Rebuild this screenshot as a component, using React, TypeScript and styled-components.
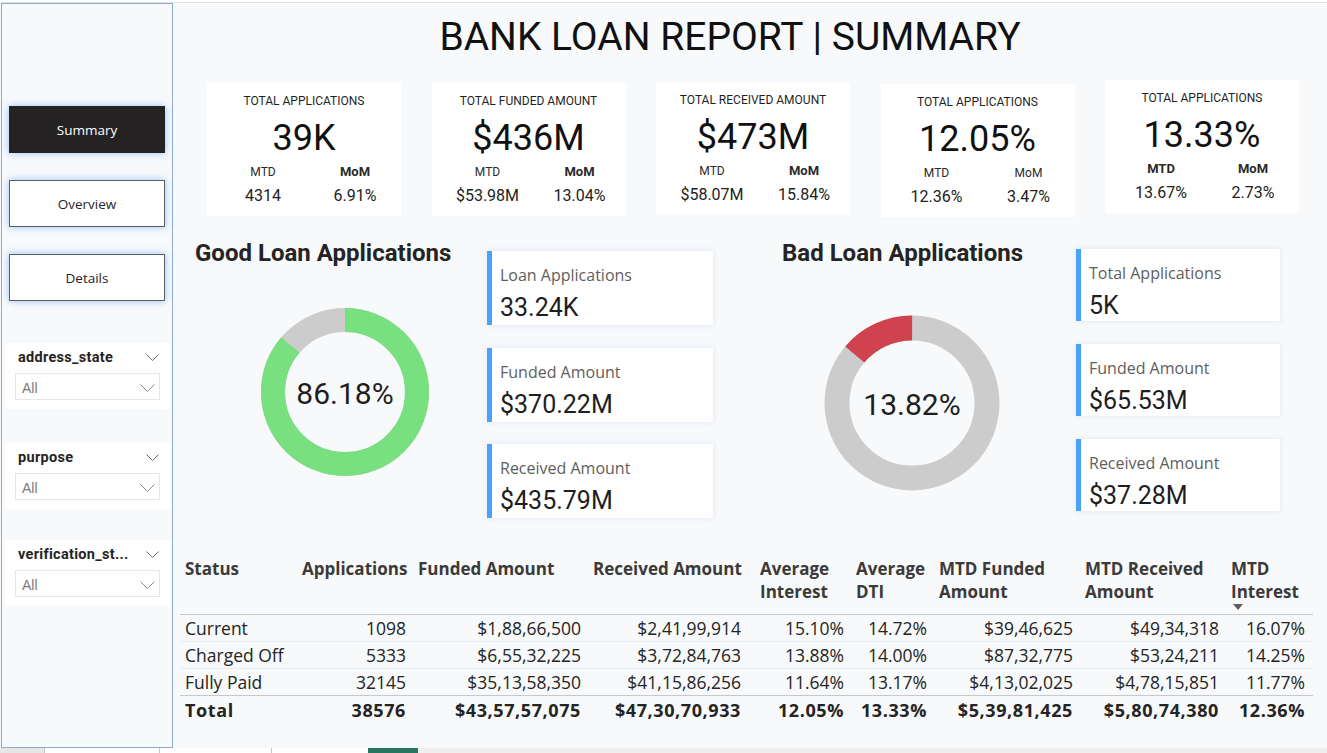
import React from 'react';
import styled, { createGlobalStyle } from 'styled-components';

const DIN = `Roboto, "Liberation Sans", sans-serif`;
const SEGOE = `"Segoe UI", "Open Sans", "Noto Sans", sans-serif`;

const GlobalStyle = createGlobalStyle`
  html, body { margin: 0; padding: 0; background: #f7f9fb; }
  body { font-family: ${SEGOE}; overflow: hidden; }
  * { box-sizing: border-box; }
`;

const Page = styled.div`
  width: 1327px;
  height: 753px;
  display: flex;
  flex-direction: column;
  background: #f7f9fb;
  overflow: hidden;
`;

const TopStrip = styled.div`
  height: 3px;
  flex-shrink: 0;
  background: #fff;
  border-bottom: 1px solid #e2e2e2;
`;

const Body = styled.div`
  flex: 1;
  display: flex;
  min-height: 0;
`;

const Sidebar = styled.aside`
  width: 172px;
  margin-left: 1px;
  flex-shrink: 0;
  border: 1px solid #8aabd3;
  background: #f7f9fb;
  display: flex;
  flex-direction: column;
  padding-top: 102px;
`;

const NavStack = styled.nav`
  display: flex;
  flex-direction: column;
  gap: 27px;
  padding-left: 7px;
`;

const NavButton = styled.div<{ $active?: boolean }>`
  width: 156px;
  height: 47px;
  display: flex;
  align-items: center;
  justify-content: center;
  font-family: ${SEGOE};
  font-size: 13.5px;
  color: ${(p) => (p.$active ? '#ffffff' : '#252423')};
  background: ${(p) => (p.$active ? '#252223' : '#ffffff')};
  border: ${(p) => (p.$active ? 'none' : '1.5px solid #5e5e5e')};
  box-shadow: 0 0 7px rgba(64, 146, 255, 0.55);
`;

const FilterStack = styled.div`
  display: flex;
  flex-direction: column;
  margin-top: 42px;
  padding-left: 3px;
`;

const FilterPanel = styled.div<{ $gap?: number }>`
  width: 165px;
  height: 66px;
  background: #ffffff;
  margin-top: ${(p) => p.$gap ?? 0}px;
`;

const FilterHead = styled.div`
  display: flex;
  align-items: center;
  justify-content: space-between;
  height: 26px;
  padding: 2px 11px 0 13px;
  font-family: ${DIN};
  font-weight: 700;
  font-size: 14.5px;
  letter-spacing: 0.3px;
  color: #252423;
`;

const Dropdown = styled.div`
  margin: 4px 0 0 10px;
  width: 145px;
  height: 27px;
  border: 1px solid #e6e6e6;
  display: flex;
  align-items: center;
  justify-content: space-between;
  padding: 2px 4px 0 6px;
  font-family: "Liberation Sans", Arial, sans-serif;
  font-size: 14px;
  color: #7a7a7a;
`;

const Main = styled.main`
  flex: 1;
  display: flex;
  flex-direction: column;
  min-width: 0;
`;

const Title = styled.h1`
  margin: 11px 0 0 0;
  width: 1114px;
  text-align: center;
  font-family: ${DIN};
  font-weight: 400;
  font-size: 39px;
  line-height: 46px;
  color: #111111;
`;

const KpiRow = styled.div`
  display: flex;
  gap: 30.5px;
  margin-top: 23px;
  padding-left: 34px;
  height: 133px;
`;

const KpiCard = styled.div<{ $dy?: number }>`
  width: 194px;
  height: 133px;
  background: #ffffff;
  display: flex;
  flex-direction: column;
  align-items: center;
  padding-top: 10px;
  margin-top: ${(p) => p.$dy ?? 0}px;
  font-family: ${DIN};
  color: #1c1c1c;
`;

const KpiLabel = styled.div`
  font-size: 12px;
  line-height: 16px;
  color: #1f1f1f;
`;

const KpiValue = styled.div`
  font-size: 36px;
  line-height: 40px;
  margin-top: 9px;
  color: #111;
`;

const KpiSub = styled.div`
  width: 100%;
  display: grid;
  grid-template-columns: 92px 92px;
  padding-left: 10px;
  margin-top: 6px;
  text-align: center;
`;

const SubLabel = styled.div<{ $bold?: boolean }>`
  font-size: ${(p) => (p.$bold ? 13 : 12)}px;
  font-weight: ${(p) => (p.$bold ? 700 : 400)};
  line-height: 16px;
  color: #2a2a2a;
`;

const SubValue = styled.div`
  font-size: 16px;
  line-height: 20px;
  margin-top: 6px;
  color: #222;
`;

const Middle = styled.section`
  display: flex;
  margin-top: 23px;
  padding-left: 22px;
  height: 290px;
`;

const LoanPanel = styled.div<{ $w: number }>`
  display: flex;
  width: ${(p) => p.$w}px;
`;

const LeftCol = styled.div<{ $w: number }>`
  width: ${(p) => p.$w}px;
  display: flex;
  flex-direction: column;
`;

const Heading = styled.h2`
  margin: 0;
  font-family: ${DIN};
  font-weight: 700;
  font-size: 24px;
  line-height: 28px;
  color: #252423;
  white-space: nowrap;
`;

const DonutWrap = styled.div<{ $size: number; $top: number; $left: number }>`
  position: relative;
  width: ${(p) => p.$size}px;
  height: ${(p) => p.$size}px;
  margin-top: ${(p) => p.$top}px;
  margin-left: ${(p) => p.$left}px;
`;

const DonutLabel = styled.div`
  position: absolute;
  inset: 0;
  display: flex;
  align-items: center;
  justify-content: center;
  padding-top: 2px;
  font-family: ${DIN};
  font-size: 30px;
  color: #1e1e1e;
`;

const CardCol = styled.div<{ $w: number; $top: number; $gap: number }>`
  width: ${(p) => p.$w}px;
  display: flex;
  flex-direction: column;
  gap: ${(p) => p.$gap}px;
  padding-top: ${(p) => p.$top}px;
`;

const InfoCard = styled.div<{ $h: number }>`
  height: ${(p) => p.$h}px;
  background: #ffffff;
  border-left: 5px solid #4ba2f8;
  box-shadow: 0 0 6px rgba(40, 80, 140, 0.1);
  padding: 13px 0 0 8px;
`;

const InfoLabel = styled.div`
  font-family: ${SEGOE};
  font-size: 16px;
  line-height: 22px;
  color: #605e5c;
`;

const InfoValue = styled.div`
  font-family: ${DIN};
  font-size: 25px;
  line-height: 30px;
  margin-top: 7px;
  color: #1e1e1e;
`;

const Table = styled.div<{ $cols: string }>`
  display: grid;
  grid-template-columns: ${(p) => p.$cols};
  margin: 27px 0 0 7px;
  width: 1133px;
  font-family: ${SEGOE};
  color: #252423;
`;

const HeadCell = styled.div<{ $pl: number }>`
  height: 59px;
  padding: 1px 0 0 ${(p) => p.$pl}px;
  font-size: 17px;
  font-weight: 700;
  line-height: 23px;
  color: #3b3a39;
  white-space: nowrap;
  border-bottom: 1px solid #c8c8c8;
`;

const Cell = styled.div<{ $left?: boolean; $bold?: boolean; $strong?: boolean; $last?: boolean }>`
  height: 27px;
  display: flex;
  align-items: center;
  justify-content: ${(p) => (p.$left ? 'flex-start' : 'flex-end')};
  padding: ${(p) => (p.$left ? '0 0 0 5px' : '0 8px 0 0')};
  font-size: ${(p) => (p.$bold ? 18 : 17.5)}px;
  letter-spacing: ${(p) => (p.$bold ? 0.6 : 0)}px;
  font-weight: ${(p) => (p.$bold ? 700 : 400)};
  white-space: nowrap;
  border-bottom: ${(p) => (p.$last ? 'none' : p.$strong ? '1px solid #c8c8c8' : '1px solid #ececec')};
`;

const SortMark = styled.div`
  width: 0;
  height: 0;
  margin: 1px 0 0 2px;
  border-left: 5px solid transparent;
  border-right: 5px solid transparent;
  border-top: 6px solid #5f5f5f;
`;

const BottomStrip = styled.div`
  height: 5px;
  flex-shrink: 0;
  display: flex;
  background: #f1efed;
`;

const Tab = styled.div<{ $w: number; $bg: string; $divider?: boolean }>`
  width: ${(p) => p.$w}px;
  background: ${(p) => p.$bg};
  border-right: ${(p) => (p.$divider ? '1px solid #c8c6c4' : 'none')};
`;

const Chevron = ({ w, h, color }: { w: number; h: number; color: string }) => (
  <svg width={w} height={h} viewBox={`0 0 ${w} ${h}`} fill="none">
    <polyline points={`0.5,0.5 ${w / 2},${h - 0.5} ${w - 0.5},0.5`} stroke={color} strokeWidth="1" />
  </svg>
);

const Donut = ({ size, r, stroke, pct, start, color, base }: { size: number; r: number; stroke: number; pct: number; start: number; color: string; base: string }) => {
  const c = 2 * Math.PI * r;
  const mid = size / 2;
  return (
    <svg width={size} height={size} viewBox={`0 0 ${size} ${size}`}>
      <circle cx={mid} cy={mid} r={r} fill="none" stroke={base} strokeWidth={stroke} />
      <circle
        cx={mid}
        cy={mid}
        r={r}
        fill="none"
        stroke={color}
        strokeWidth={stroke}
        strokeDasharray={`${(pct / 100) * c} ${c}`}
        transform={`rotate(${start} ${mid} ${mid})`}
      />
    </svg>
  );
};

type Kpi = {
  label: string;
  value: string;
  mtd: string;
  mom: string;
  mtdBold?: boolean;
  momBold?: boolean;
  dy?: number;
};

const kpis: Kpi[] = [
  { label: 'TOTAL APPLICATIONS', value: '39K', mtd: '4314', mom: '6.91%', momBold: true },
  { label: 'TOTAL FUNDED AMOUNT', value: '$436M', mtd: '$53.98M', mom: '13.04%', momBold: true },
  { label: 'TOTAL RECEIVED AMOUNT', value: '$473M', mtd: '$58.07M', mom: '15.84%', momBold: true, dy: -1 },
  { label: 'TOTAL APPLICATIONS', value: '12.05%', mtd: '12.36%', mom: '3.47%', dy: 1 },
  { label: 'TOTAL APPLICATIONS', value: '13.33%', mtd: '13.67%', mom: '2.73%', mtdBold: true, momBold: true, dy: -3 },
];

const columns = [
  { w: 118, pl: 5, head: ['Status'] },
  { w: 116, pl: 4, head: ['Applications'] },
  { w: 175, pl: 4, head: ['Funded Amount'] },
  { w: 160, pl: 4, head: ['Received Amount'] },
  { w: 103, pl: 11, head: ['Average', 'Interest'] },
  { w: 83, pl: 4, head: ['Average', 'DTI'] },
  { w: 146, pl: 4, head: ['MTD Funded', 'Amount'] },
  { w: 146, pl: 4, head: ['MTD Received', 'Amount'] },
  { w: 86, pl: 4, head: ['MTD', 'Interest'], sort: true },
];

const rows = [
  ['Current', '1098', '$1,88,66,500', '$2,41,99,914', '15.10%', '14.72%', '$39,46,625', '$49,34,318', '16.07%'],
  ['Charged Off', '5333', '$6,55,32,225', '$3,72,84,763', '13.88%', '14.00%', '$87,32,775', '$53,24,211', '14.25%'],
  ['Fully Paid', '32145', '$35,13,58,350', '$41,15,86,256', '11.64%', '13.17%', '$4,13,02,025', '$4,78,15,851', '11.77%'],
];
const total = ['Total', '38576', '$43,57,57,075', '$47,30,70,933', '12.05%', '13.33%', '$5,39,81,425', '$5,80,74,380', '12.36%'];

const filters = [
  { name: 'address_state', gap: 0 },
  { name: 'purpose', gap: 34 },
  { name: 'verification_st...', gap: 31 },
];

export default function App() {
  return (
    <>
      <GlobalStyle />
      <Page>
        <TopStrip />
        <Body>
          <Sidebar>
            <NavStack>
              <NavButton $active>Summary</NavButton>
              <NavButton>Overview</NavButton>
              <NavButton>Details</NavButton>
            </NavStack>
            <FilterStack>
              {filters.map((f) => (
                <FilterPanel key={f.name} $gap={f.gap}>
                  <FilterHead>
                    <span>{f.name}</span>
                    <Chevron w={13} h={7} color="#6b6b6b" />
                  </FilterHead>
                  <Dropdown>
                    <span>All</span>
                    <Chevron w={15} h={8} color="#8a8a8a" />
                  </Dropdown>
                </FilterPanel>
              ))}
            </FilterStack>
          </Sidebar>
          <Main>
            <Title>BANK LOAN REPORT | SUMMARY</Title>
            <KpiRow>
              {kpis.map((k, i) => (
                <KpiCard key={i} $dy={k.dy}>
                  <KpiLabel>{k.label}</KpiLabel>
                  <KpiValue>{k.value}</KpiValue>
                  <KpiSub>
                    <SubLabel $bold={k.mtdBold}>MTD</SubLabel>
                    <SubLabel $bold={k.momBold}>MoM</SubLabel>
                    <SubValue>{k.mtd}</SubValue>
                    <SubValue>{k.mom}</SubValue>
                  </KpiSub>
                </KpiCard>
              ))}
            </KpiRow>
            <Middle>
              <LoanPanel $w={587}>
                <LeftCol $w={292}>
                  <Heading>Good Loan Applications</Heading>
                  <DonutWrap $size={170} $top={40} $left={65}>
                    <Donut size={170} r={72} stroke={24} pct={86.18} start={-90} color="#78e07e" base="#cccccc" />
                    <DonutLabel>86.18%</DonutLabel>
                  </DonutWrap>
                </LeftCol>
                <CardCol $w={226} $top={12} $gap={22.5}>
                  <InfoCard $h={74}>
                    <InfoLabel>Loan Applications</InfoLabel>
                    <InfoValue>33.24K</InfoValue>
                  </InfoCard>
                  <InfoCard $h={74}>
                    <InfoLabel>Funded Amount</InfoLabel>
                    <InfoValue>$370.22M</InfoValue>
                  </InfoCard>
                  <InfoCard $h={74}>
                    <InfoLabel>Received Amount</InfoLabel>
                    <InfoValue>$435.79M</InfoValue>
                  </InfoCard>
                </CardCol>
              </LoanPanel>
              <LoanPanel $w={520}>
                <LeftCol $w={294}>
                  <Heading>Bad Loan Applications</Heading>
                  <DonutWrap $size={176} $top={48} $left={42}>
                    <Donut size={176} r={75} stroke={25} pct={13.82} start={-90 - 49.75} color="#d1424f" base="#cccccc" />
                    <DonutLabel>13.82%</DonutLabel>
                  </DonutWrap>
                </LeftCol>
                <CardCol $w={204} $top={10} $gap={23}>
                  <InfoCard $h={72}>
                    <InfoLabel>Total Applications</InfoLabel>
                    <InfoValue>5K</InfoValue>
                  </InfoCard>
                  <InfoCard $h={72}>
                    <InfoLabel>Funded Amount</InfoLabel>
                    <InfoValue>$65.53M</InfoValue>
                  </InfoCard>
                  <InfoCard $h={72}>
                    <InfoLabel>Received Amount</InfoLabel>
                    <InfoValue>$37.28M</InfoValue>
                  </InfoCard>
                </CardCol>
              </LoanPanel>
            </Middle>
            <Table $cols={columns.map((c) => `${c.w}px`).join(' ')}>
              {columns.map((c, i) => (
                <HeadCell key={`h${i}`} $pl={c.pl}>
                  {c.head.map((line) => (
                    <div key={line}>{line}</div>
                  ))}
                  {c.sort && <SortMark />}
                </HeadCell>
              ))}
              {rows.map((r, ri) =>
                r.map((v, ci) => (
                  <Cell key={`${ri}-${ci}`} $left={ci === 0} $strong={ri === rows.length - 1}>
                    {v}
                  </Cell>
                ))
              )}
              {total.map((v, ci) => (
                <Cell key={`t${ci}`} $left={ci === 0} $bold $last>
                  {v}
                </Cell>
              ))}
            </Table>
          </Main>
        </Body>
        <BottomStrip>
          <Tab $w={45} $bg="#e6e6e6" $divider />
          <Tab $w={115} $bg="#ffffff" $divider />
          <Tab $w={112} $bg="#ffffff" $divider />
          <Tab $w={96} $bg="#ffffff" />
          <Tab $w={50} $bg="#2a7560" />
        </BottomStrip>
      </Page>
    </>
  );
}
